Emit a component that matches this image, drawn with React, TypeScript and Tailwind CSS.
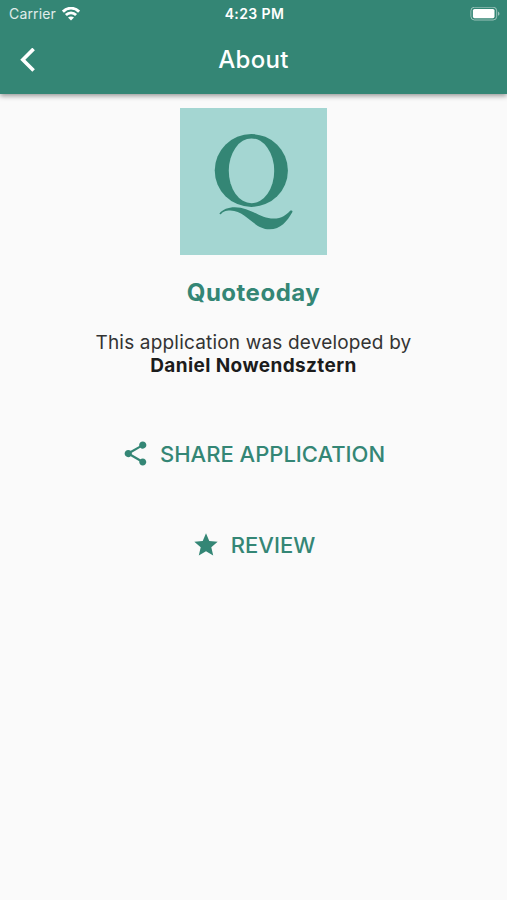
import React from 'react';
import { MdShare, MdStar } from 'react-icons/md';

interface ActionButtonProps {
  icon: React.ReactNode;
  label: string;
}

const StatusBar: React.FC = () => (
  <div className="grid grid-cols-3 items-center h-[27px] pl-[9px] pr-[7px] text-white">
    <div className="flex items-center gap-[6px]">
      <span className="text-[14px] leading-none tracking-[0.15px] text-white/85">Carrier</span>
      <svg width="18" height="14" viewBox="0 0 18 14" fill="none" stroke="currentColor" strokeWidth="2.8">
        <path d="M0.9 4.7C5.4 0 12.6 0 17.1 4.7" />
        <path d="M3.9 8.1C6.8 5.2 11.2 5.2 14.1 8.1" />
        <path d="M9 13.4L6 10.5C7.7 9 10.3 9 12 10.5Z" fill="currentColor" stroke="none" />
      </svg>
    </div>
    <span className="pt-px text-center text-[14px] leading-none font-semibold tracking-[0.4px] whitespace-nowrap">4:23 PM</span>
    <svg className="justify-self-end" width="30" height="14" viewBox="0 0 30 14" fill="none">
      <rect x="0.9" y="0.2" width="25.8" height="12.8" rx="3.6" stroke="white" strokeOpacity="0.5" />
      <rect x="2.9" y="2" width="21.6" height="9.2" rx="1.6" fill="white" />
      <path d="M28 4.4C30 5.2 30 8 28 8.8Z" fill="white" fillOpacity="0.5" />
    </svg>
  </div>
);

const AppBar: React.FC = () => (
  <header className="h-[94px] bg-[#348675] shadow-[0_2px_5px_rgba(0,0,0,0.4)]">
    <StatusBar />
    <div className="grid grid-cols-[60px_1fr_60px] items-center h-[66px]">
      <button className="pl-[20px]" aria-label="Back">
        <svg width="16" height="25" viewBox="0 0 16 25" fill="none" stroke="white" strokeWidth="3.6">
          <path d="M13.6 0.9L2.8 11.7L13.6 22.5" />
        </svg>
      </button>
      <h1 className="text-center text-[24px] leading-none font-medium text-white tracking-[0.3px]">About</h1>
    </div>
  </header>
);

const Logo: React.FC = () => (
  <div className="w-[147px] h-[147px] bg-[#a4d6d2]">
    <svg width="147" height="147" viewBox="0 0 440 440" fill="#348675">
      <ellipse cx="213.5" cy="187" rx="109.5" ry="109" />
      <ellipse cx="214" cy="188" rx="68" ry="97" fill="#a4d6d2" />
      <path d="M119 314C128 304 144 297 164 297C210 297 240 331 280 331C305 331 318 319 329 308C332 305 339 307 336 312C321 339 301 363 268 363C220 363 198 307 151 307C135 307 128 312 123 317C120 319 117 317 119 314Z" />
    </svg>
  </div>
);

const ActionButton: React.FC<ActionButtonProps> = ({ icon, label }) => (
  <button className="flex items-center gap-[11px] h-[49px] text-[#348675] text-[22px] font-medium leading-none">
    {icon}
    <span>{label}</span>
  </button>
);

export default function App() {
  return (
    <div className="flex flex-col min-h-screen bg-[#fafafa] font-['Inter',sans-serif]">
      <AppBar />
      <main className="flex flex-col items-center pt-[14px]">
        <Logo />
        <h2 className="mt-[21px] text-[24px] leading-[34px] font-bold tracking-[0.5px] text-[#348675]">Quoteoday</h2>
        <p className="mt-[21px] text-center text-[19px] leading-[23px] tracking-[0.18px] text-[#333333]">
          This application was developed by
          <br />
          <strong className="font-bold tracking-[0.4px] text-[#1c1c1c]">Daniel Nowendsztern</strong>
        </p>
        <div className="flex flex-col items-center gap-[42px] mt-[52px]">
          <ActionButton icon={<MdShare className="w-[29px] h-[29px] -ml-px -mr-px" />} label="SHARE APPLICATION" />
          <ActionButton icon={<MdStar className="w-[28px] h-[28px]" />} label="REVIEW" />
        </div>
      </main>
    </div>
  );
}
